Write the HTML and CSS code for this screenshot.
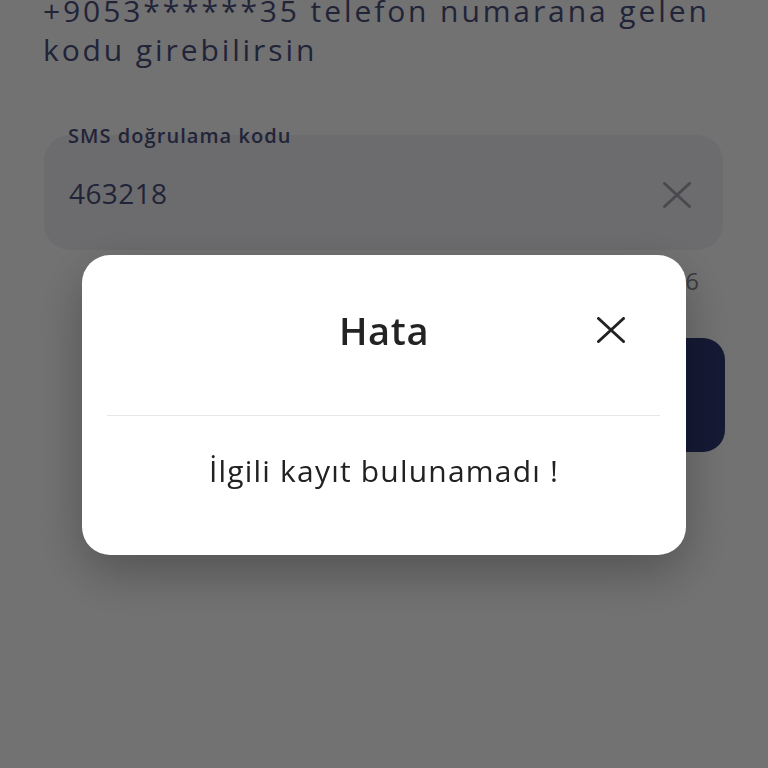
FILE: index.html
```html
<!DOCTYPE html>
<html lang="tr">
<head>
<meta charset="utf-8">
<title>SMS doğrulama</title>
<link rel="stylesheet" href="styles.css">
</head>
<body>
<main class="page">
  <h1 class="intro">+9053******35 telefon numarana gelen<br>kodu girebilirsin</h1>
  <div class="field">
    <label class="field-label">SMS doğrulama kodu</label>
    <span class="field-value">463218</span>
    <button class="field-clear" aria-label="Temizle">
      <svg width="28" height="26" viewBox="0 0 28 26"><path d="M1.5 1.5 L26.5 24.5 M26.5 1.5 L1.5 24.5" fill="none" stroke="currentColor" stroke-width="3" stroke-linecap="round"/></svg>
    </button>
  </div>
  <p class="timer">Kalan süre: 01:76</p>
  <div class="actions"><button class="primary">Doğrula</button></div>
</main>
<div class="overlay">
  <div class="dialog">
    <div class="dialog-head">
      <h2 class="dialog-title">Hata</h2>
      <button class="dialog-close" aria-label="Kapat">
        <svg width="28" height="26" viewBox="0 0 28 26"><path d="M1.5 1.5 L26.5 24.5 M26.5 1.5 L1.5 24.5" fill="none" stroke="currentColor" stroke-width="3" stroke-linecap="round"/></svg>
      </button>
    </div>
    <div class="dialog-divider"></div>
    <p class="dialog-body">İlgili kayıt bulunamadı !</p>
  </div>
</div>
</body>
</html>
```
FILE: styles.css
```css
* { box-sizing: border-box; }
html, body { margin: 0; padding: 0; }
body {
  width: 768px;
  height: 768px;
  overflow: hidden;
  background: #ffffff;
  font-family: "Open Sans", "Noto Sans", sans-serif;
  color: #4f5580;
}
.page {
  padding: 0 45px 0 44px;
}
.intro {
  margin: -9px 0 0 -1px;
  font-size: 30px;
  line-height: 39px;
  font-weight: 400;
  letter-spacing: 2.9px;
  color: #4b5180;
}
.field {
  position: relative;
  margin-top: 66px;
  height: 115px;
  border-radius: 26px;
  background: #f2f2f6;
  padding: 0 32px 0 25px;
  display: flex;
  align-items: center;
  justify-content: space-between;
}
.field-label {
  position: absolute;
  left: 24px;
  top: -11px;
  font-size: 20px;
  line-height: 24px;
  font-weight: 600;
  letter-spacing: 1.05px;
  color: #4b5180;
}
.field-value {
  font-size: 28px;
  line-height: 36px;
  letter-spacing: 0.4px;
  color: #4b5180;
}
.field-clear {
  border: 0;
  background: none;
  padding: 0;
  margin-top: 4px;
  display: flex;
  color: #a4a4ae;
}
.timer {
  margin: 16px 24px 0 0;
  text-align: right;
  font-size: 24px;
  line-height: 30px;
  color: #86868f;
}
.actions {
  margin-top: 42px;
  display: flex;
  justify-content: flex-end;
}
.primary {
  width: 320px;
  height: 114px;
  margin-right: -2px;
  border: 0;
  border-radius: 22px;
  background: #2f3a77;
  color: #ffffff;
  font-family: inherit;
  font-size: 26px;
}
.overlay {
  position: fixed;
  inset: 0;
  background: rgba(0, 0, 0, 0.553);
  display: flex;
  justify-content: center;
  align-items: flex-start;
  padding-top: 255px;
}
.dialog {
  position: relative;
  width: 604px;
  background: #ffffff;
  border-radius: 28px;
  box-shadow: 0 18px 50px rgba(0, 0, 0, 0.28);
}
.dialog-head {
  padding: 51px 0 61px;
  text-align: center;
}
.dialog-title {
  margin: 0;
  font-size: 38px;
  line-height: 48px;
  font-weight: 600;
  letter-spacing: 0.6px;
  color: #232323;
}
.dialog-close {
  position: absolute;
  top: 62px;
  right: 61px;
  border: 0;
  background: none;
  padding: 0;
  display: flex;
  color: #222222;
}
.dialog-divider {
  margin: 0 26px 0 25px;
  border-top: 1px solid #e6e6e6;
}
.dialog-body {
  margin: 0;
  padding: 35px 0 64px;
  text-align: center;
  font-size: 30px;
  line-height: 40px;
  letter-spacing: 1.2px;
  color: #222222;
}
```
